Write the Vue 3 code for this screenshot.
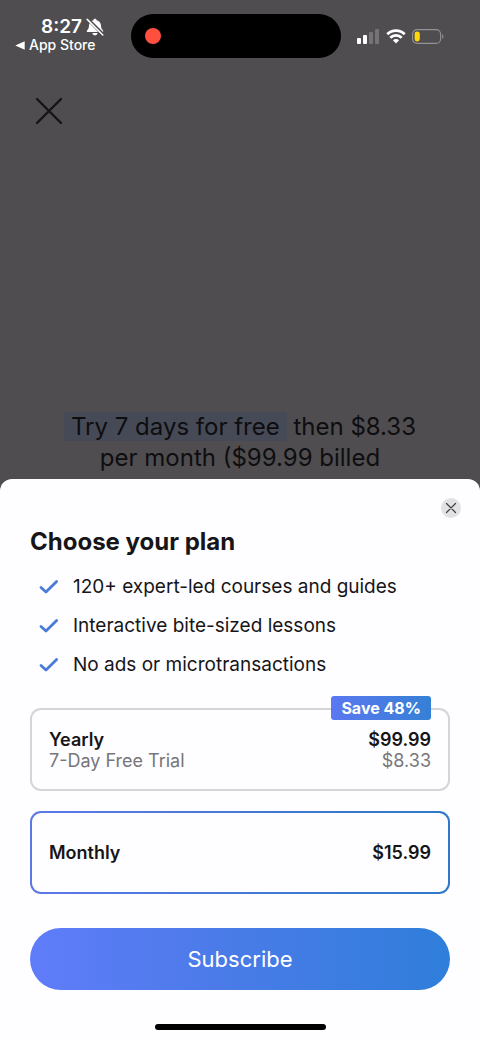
<script setup>
import { ref } from 'vue'

const selected = ref('monthly')
const features = [
  '120+ expert-led courses and guides',
  'Interactive bite-sized lessons',
  'No ads or microtransactions',
]
const plans = [
  { id: 'yearly', name: 'Yearly', note: '7-Day Free Trial', price: '$99.99', perMonth: '$8.33', badge: 'Save 48%' },
  { id: 'monthly', name: 'Monthly', price: '$15.99' },
]
</script>

<template>
  <div class="page">
    <header class="status">
      <div class="status-left">
        <div class="clock">
          <span>8:27</span>
          <svg class="bell" viewBox="0 0 18 18" aria-hidden="true">
            <path d="M9 .8c-.9 0-1.500.6-1.600 1.400C4.600 2.900 3.100 5 3 7.500 2.900 10 2.400 11 1.200 12.200c-.8.8-.5 1.800.6 1.800h14.400c1.100 0 1.400-1 .6-1.800-1.200-1.200-1.700-2.200-1.800-4.700-.1-2.500-1.600-4.600-4.400-5.300C10.500 1.400 9.900.8 9 .8ZM6.400 15c.2 1.400 1.300 2.300 2.600 2.300s2.400-.9 2.600-2.300Z" fill="#fff" />
            <path d="M2 1.400 16.800 16.200" stroke="#4f4d4f" stroke-width="3.400" />
            <path d="M1.200 1.400 16.800 17" stroke="#fff" stroke-width="1.500" stroke-linecap="round" />
          </svg>
        </div>
        <a class="back" href="#">
          <svg class="back-arrow" viewBox="0 0 9 8" aria-hidden="true"><path d="M.3 4 8.700.2v7.600Z" fill="#fff" /></svg>
          <span>App Store</span>
        </a>
      </div>
      <div class="island"><span class="rec"></span></div>
      <div class="status-right">
        <svg class="signal" viewBox="0 0 23 15" aria-hidden="true">
          <rect x="0" y="9" width="4" height="6" rx="1" fill="#fff" />
          <rect x="6" y="6" width="4" height="9" rx="1" fill="#fff" />
          <rect x="12" y="3" width="4" height="12" rx="1" fill="#757375" />
          <rect x="18" y="0" width="4" height="15" rx="1" fill="#757375" />
        </svg>
        <svg class="wifi" viewBox="0 0 20 15" aria-hidden="true">
          <g fill="none" stroke="#fff" stroke-width="2.800">
            <path d="M1.300 5.200a12.300 12.300 0 0 1 17.400 0" />
            <path d="M4.300 8.700a8 8 0 0 1 11.400 0" />
          </g>
          <path d="M6.900 11.200a4.400 4.400 0 0 1 6.200 0L10 14.600Z" fill="#fff" />
        </svg>
        <svg class="battery" viewBox="0 0 32 15" aria-hidden="true">
          <rect x=".6" y=".6" width="28" height="13.800" rx="4.500" fill="none" stroke="#949294" stroke-width="1.100" />
          <rect x="2.600" y="2.600" width="5.200" height="9.800" rx="2.400" fill="#ffd60a" />
          <path d="M30.200 5.200c1.700.7 1.700 3.900 0 4.600Z" fill="#949294" />
        </svg>
      </div>
    </header>

    <main class="behind">
      <button class="leave" type="button" aria-label="Close">
        <svg viewBox="0 0 28 28" aria-hidden="true"><path d="M2 2 26 26M26 2 2 26" stroke="#161516" stroke-width="2.400" stroke-linecap="round" /></svg>
      </button>
      <p class="offer"><mark>Try 7 days for free</mark> then $8.33<br>per month ($99.99 billed</p>
    </main>

    <form class="sheet" @submit.prevent>
      <button class="dismiss" type="button" aria-label="Dismiss plans">
        <svg viewBox="0 0 20 20" aria-hidden="true"><path d="M5.500 5.500l9 9M14.500 5.500l-9 9" stroke="#3f3e40" stroke-width="1.200" stroke-linecap="round" /></svg>
      </button>
      <h1>Choose your plan</h1>
      <ul class="features">
        <li v-for="f in features" :key="f">
          <svg viewBox="0 0 20 16" aria-hidden="true"><path d="M2 8.500 7 13 17.600 2.500" fill="none" stroke="#4a7bd8" stroke-width="2.800" stroke-linecap="round" stroke-linejoin="round" /></svg>
          <span>{{ f }}</span>
        </li>
      </ul>
      <div class="plans">
        <label v-for="p in plans" :key="p.id" class="plan" :class="{ active: selected === p.id }">
          <input v-model="selected" type="radio" name="plan" :value="p.id">
          <span v-if="p.badge" class="badge">{{ p.badge }}</span>
          <span class="info">
            <span class="name">{{ p.name }}</span>
            <span v-if="p.note" class="sub">{{ p.note }}</span>
          </span>
          <span class="info cost">
            <span class="name">{{ p.price }}</span>
            <span v-if="p.perMonth" class="sub">{{ p.perMonth }}</span>
          </span>
        </label>
      </div>
      <button class="subscribe" type="submit">Subscribe</button>
      <div class="home"></div>
    </form>
  </div>
</template>

<style>
body {
  margin: 0;
  background: #4f4d4f;
}
</style>

<style scoped>
.page {
  min-height: 100vh;
  display: flex;
  flex-direction: column;
  background: #4f4d4f;
  font-family: Inter, "Liberation Sans", sans-serif;
  color: #161517;
}
button {
  border: 0;
  padding: 0;
  background: none;
  font: inherit;
  cursor: pointer;
}
svg {
  display: block;
}
.status {
  display: grid;
  grid-template-columns: 1fr 210px 1fr;
  align-items: center;
  padding: 14px 8px 0 0;
  color: #fff;
}
.status-left {
  padding: 0 0 2px 15px;
}
.clock {
  display: flex;
  align-items: center;
  gap: 4px;
  padding-left: 26px;
  font-size: 19px;
  line-height: 20px;
  font-weight: 600;
}
.bell {
  width: 18px;
  height: 18px;
}
.back {
  display: flex;
  align-items: center;
  gap: 4px;
  color: #fff;
  text-decoration: none;
  font-size: 14px;
  line-height: 16px;
  font-weight: 500;
}
.back-arrow {
  width: 10px;
  height: 9px;
}
.island {
  height: 44px;
  border-radius: 22px;
  background: #000;
  display: flex;
  align-items: center;
  padding-left: 14px;
}
.rec {
  width: 16px;
  height: 16px;
  border-radius: 50%;
  background: #ff4f3f;
}
.status-right {
  display: flex;
  align-items: center;
  gap: 6px;
  padding-left: 16px;
}
.signal {
  width: 23px;
  height: 15px;
}
.wifi {
  width: 20px;
  height: 15px;
}
.battery {
  width: 32px;
  height: 15px;
}
.behind {
  flex: 1;
  display: flex;
  flex-direction: column;
  justify-content: space-between;
  align-items: flex-start;
  padding: 39px 35px 6px;
}
.leave svg {
  width: 28px;
  height: 28px;
}
.offer {
  align-self: center;
  margin: 0;
  font-size: 24px;
  line-height: 31px;
  text-align: center;
  color: #0e0d0f;
}
.offer mark {
  padding: 0 7px;
  background: #454a56;
  color: inherit;
}
.sheet {
  display: flex;
  flex-direction: column;
  padding: 19px 30px 10px;
  border-radius: 12px 12px 0 0;
  background: #fefdff;
}
.dismiss {
  align-self: flex-end;
  width: 20px;
  height: 20px;
  margin-right: -11px;
  border-radius: 50%;
  background: #e2e1e3;
}
.dismiss svg {
  width: 20px;
  height: 20px;
}
h1 {
  margin: 9px 0 10px;
  font-size: 24px;
  line-height: 30px;
  font-weight: 700;
}
.features {
  margin: 0;
  padding: 0 0 0 9px;
  list-style: none;
  font-size: 19px;
  line-height: 39px;
}
.features li {
  display: flex;
  align-items: center;
  gap: 14px;
}
.features svg {
  width: 20px;
  height: 16px;
}
.plans {
  display: flex;
  flex-direction: column;
  gap: 20px;
  margin: 24px 0 34px;
}
.plan {
  position: relative;
  display: flex;
  justify-content: space-between;
  align-items: center;
  min-height: 79px;
  padding: 0 17px;
  border: 2px solid transparent;
  border-radius: 11px;
  background: linear-gradient(#fefdff, #fefdff) padding-box, linear-gradient(#d5d5d8, #d5d5d8) border-box;
  cursor: pointer;
}
.plan.active {
  background: linear-gradient(#fefdff, #fefdff) padding-box, linear-gradient(90deg, #5c78e6, #2f79c8) border-box;
}
.plan input {
  position: absolute;
  inset: 0;
  width: 100%;
  height: 100%;
  margin: 0;
  opacity: 0;
  cursor: pointer;
}
.badge {
  position: absolute;
  top: -14px;
  right: 17px;
  padding: 0 10px;
  border-radius: 3px;
  background: linear-gradient(90deg, #5b78f0, #3580d6);
  color: #fff;
  font-size: 16px;
  line-height: 24px;
  font-weight: 700;
}
.info {
  display: flex;
  flex-direction: column;
  font-size: 18px;
  line-height: 21px;
}
.cost {
  text-align: right;
}
.name {
  font-weight: 600;
}
.sub {
  color: #77767a;
}
.subscribe {
  height: 62px;
  border-radius: 31px;
  background: linear-gradient(90deg, #607cfa, #4b7be8 45%, #2f7edb);
  color: #fff;
  font-size: 22px;
}
.home {
  align-self: center;
  width: 171px;
  height: 6px;
  margin-top: 34px;
  border-radius: 3px;
  background: #000;
}
</style>
